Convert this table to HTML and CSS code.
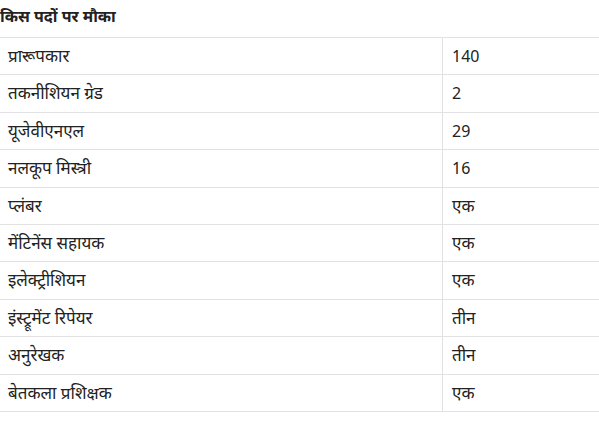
FILE: index.html
```html
<!DOCTYPE html>
<html lang="hi">
<head>
<meta charset="utf-8">
<link rel="stylesheet" href="styles.css">
</head>
<body>
<h3 class="title">किस पदों पर मौका</h3>
<table class="posts">
<tbody>
<tr><td class="name">प्रारूपकार</td><td>140</td></tr>
<tr><td class="name">तकनीशियन ग्रेड</td><td>2</td></tr>
<tr><td class="name">यूजेवीएनएल</td><td>29</td></tr>
<tr><td class="name">नलकूप मिस्त्री</td><td>16</td></tr>
<tr><td class="name">प्लंबर</td><td class="hi">एक</td></tr>
<tr><td class="name">मेंटिनेंस सहायक</td><td class="hi">एक</td></tr>
<tr><td class="name">इलेक्ट्रीशियन</td><td class="hi">एक</td></tr>
<tr><td class="name">इंस्ट्रूमेंट रिपेयर</td><td class="hi">तीन</td></tr>
<tr><td class="name">अनुरेखक</td><td class="hi">तीन</td></tr>
<tr><td class="name">बेतकला प्रशिक्षक</td><td class="hi">एक</td></tr>
</tbody>
</table>
</body>
</html>
```
FILE: styles.css
```css
html, body {
  margin: 0;
  padding: 0;
  background: #fff;
}
body {
  font-family: "Noto Sans", "Open Sans", sans-serif;
  color: #222;
  font-size: 16px;
}
.title {
  margin: 0;
  padding: 3px 0 0 0;
  height: 34px;
  font-size: 16px;
  font-weight: 700;
  line-height: 26px;
  color: #222;
}
.posts {
  width: 100%;
  border-collapse: collapse;
  border-top: 1px solid #e2e2e2;
}
.posts td {
  padding: 6px 9px;
  height: 24.4px;
  line-height: 24.4px;
  border-bottom: 1px solid #e2e2e2;
  vertical-align: middle;
  white-space: nowrap;
}
.posts td.name,
.posts td.hi {
  font-size: 17px;
}
.posts td.name {
  width: 425px;
  padding-left: 8px;
  border-right: 1px solid #e2e2e2;
}
```
